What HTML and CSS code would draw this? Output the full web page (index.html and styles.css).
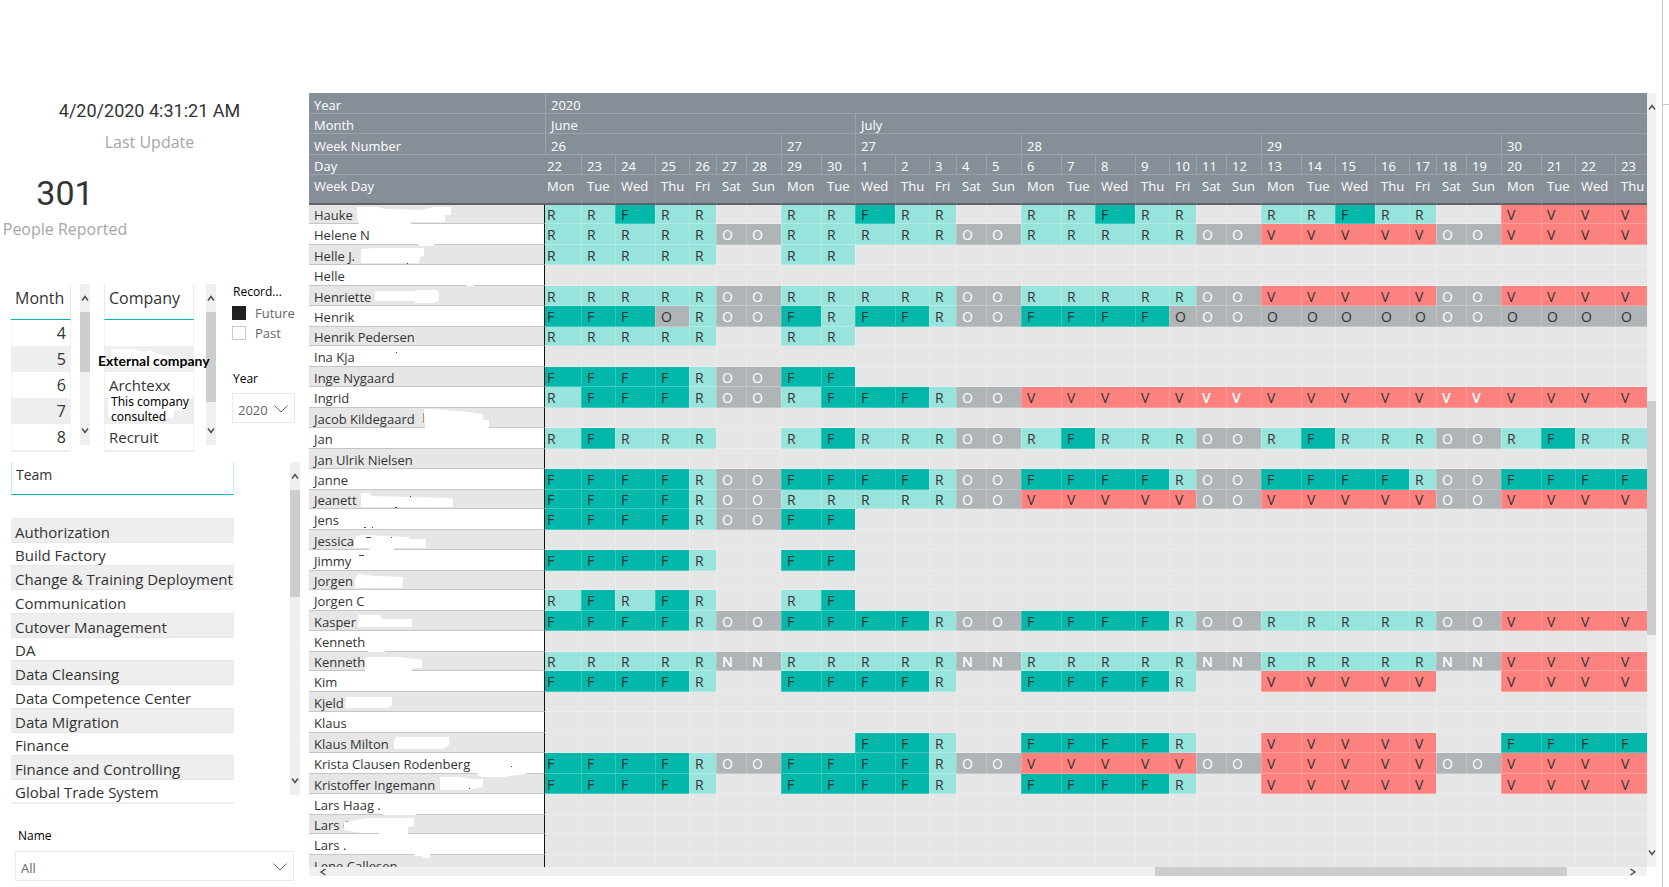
FILE: index.html
```html
<!DOCTYPE html>
<html lang="en">
<head>
<meta charset="utf-8">
<title>Resource calendar</title>
<link rel="stylesheet" href="styles.css">
</head>
<body>
<svg class="defs" aria-hidden="true">
  <symbol id="up" viewBox="0 0 8 8"><path d="M1 6.5 4 2.5 7 6.5" fill="none" stroke="#505050" stroke-width="1.5"/></symbol>
  <symbol id="down" viewBox="0 0 8 8"><path d="M1 1.5 4 5.5 7 1.5" fill="none" stroke="#505050" stroke-width="1.5"/></symbol>
  <symbol id="left" viewBox="0 0 8 8"><path d="M6.5 1 2 4 6.5 7" fill="none" stroke="#505050" stroke-width="1.5"/></symbol>
  <symbol id="right" viewBox="0 0 8 8"><path d="M1.500 1 6 4 1.500 7" fill="none" stroke="#505050" stroke-width="1.5"/></symbol>
  <symbol id="chevron" viewBox="0 0 14 8"><path d="M.5 .5 7 7 13.500 .5" fill="none" stroke="#666" stroke-width="1"/></symbol>
</svg>
<div class="report">
  <aside class="side">
    <div class="card card-update"><div class="card-date">4/20/2020 4:31:21 AM</div><div class="card-label">Last Update</div></div>
    <div class="card card-people"><div class="card-count">301</div><div class="card-label">People Reported</div></div>

    <div class="slicers">
      <div class="clip month">
        <table class="list">
          <thead><tr><th>Month</th></tr></thead>
          <tbody><tr><td>4</td></tr><tr><td>5</td></tr><tr><td>6</td></tr><tr><td>7</td></tr><tr><td>8</td></tr><tr><td></td></tr></tbody>
        </table>
      </div>
      <div class="scroll scroll-month">
        <button type="button" aria-label="Scroll up"><svg><use href="#up"/></svg></button><i class="before"></i><i class="thumb"></i><i class="after"></i>
        <button type="button" aria-label="Scroll down"><svg><use href="#down"/></svg></button>
      </div>
      <div class="clip company">
        <table class="list">
          <thead><tr><th>Company</th></tr></thead>
          <tbody><tr><td></td></tr><tr><td></td></tr><tr><td>Archtexx</td></tr><tr><td></td></tr><tr><td>Recruit</td></tr><tr><td></td></tr></tbody>
        </table>
      </div>
      <div class="scroll scroll-company">
        <button type="button" aria-label="Scroll up"><svg><use href="#up"/></svg></button><i class="before"></i><i class="thumb"></i><i class="after"></i>
        <button type="button" aria-label="Scroll down"><svg><use href="#down"/></svg></button>
      </div>
      <svg class="patch" viewBox="104 340 90 90" aria-hidden="true"><path fill="#fff" d="M111 349H134L144 352 150 350 158 354 180 359V367H111ZM108 398H186V410H174V418H108Z"/></svg>
      <span class="note note-external">External company</span>
      <span class="note note-consulted">This company consulted</span>
      <div class="filters">
        <fieldset>
          <legend>Record...</legend>
          <label class="check"><input type="checkbox" checked>Future</label>
          <label class="check"><input type="checkbox">Past</label>
        </fieldset>
        <label class="caption" for="year">Year</label>
        <div class="drop drop-year"><select id="year"><option>2020</option></select><svg><use href="#chevron"/></svg></div>
      </div>
    </div>

    <div class="team-row">
      <table class="team">
        <thead><tr><th>Team</th></tr></thead>
        <tbody>
          <tr><td>Authorization</td></tr><tr><td>Build Factory</td></tr><tr><td>Change &amp; Training Deployment</td></tr><tr><td>Communication</td></tr>
          <tr><td>Cutover Management</td></tr><tr><td>DA</td></tr><tr><td>Data Cleansing</td></tr><tr><td>Data Competence Center</td></tr>
          <tr><td>Data Migration</td></tr><tr><td>Finance</td></tr><tr><td>Finance and Controlling</td></tr><tr><td>Global Trade System</td></tr>
        </tbody>
      </table>
      <div class="scroll scroll-team">
        <button type="button" aria-label="Scroll up"><svg><use href="#up"/></svg></button><i class="before"></i><i class="thumb"></i><i class="after"></i>
        <button type="button" aria-label="Scroll down"><svg><use href="#down"/></svg></button>
      </div>
    </div>

    <label class="caption caption-name" for="name">Name</label>
    <div class="drop drop-name"><select id="name"><option>All</option></select><svg><use href="#chevron"/></svg></div>
  </aside>

  <main class="main">
    <div class="matrix-row">
      <div class="matrix-clip">
        <table class="matrix"><colgroup id="cols"></colgroup><thead id="head"></thead><tbody id="body"></tbody></table>
        <svg class="redact" viewBox="309 93 235 774" aria-hidden="true">
          <g fill="#fff">
            <path d="M357 207H377L386 209 423 210 433 207H451V215H445V222H411V224H359L357 218Z"/>
            <path d="M417 243H434V246H420Z"/>
            <path d="M361 249 375 248H424V256L420 257 419 263H361Z"/>
            <path d="M466 284H474V286H466Z"/>
            <path d="M375 291H415V290H436L439 292V300L435 303H415V301H375Z"/>
            <path d="M424 409H432L460 411 483 414V420H489V428H425Z"/>
            <path d="M361 493H370L372 496 450 498 453 499V507H361Z"/>
            <path d="M357 536 364 535 409 537V539H426V548H394V550H369V548H354V540Z"/>
            <path d="M394 568H402V570H394Z"/>
            <path d="M358 574 375 576 403 577 402 588H355V580Z"/>
            <path d="M358 615H381V619H412V627H358Z"/>
            <path d="M368 650H385V652H368Z"/>
            <path d="M366 657H399L415 659 422 660V668H413L411 671H365V660Z"/>
            <path d="M346 697H392V705L388 708H345Z"/>
            <path d="M396 737H449V745L443 749H394V741Z"/>
            <path d="M476 772H526V774L503 777H480Z"/>
            <path d="M440 777H459L472 779H483V787L468 790H440Z"/>
            <path d="M383 813H416V815H383Z"/>
            <path d="M344 822 368 818H414V826L408 827V834H379V833H362L344 830Z"/>
            <path d="M414 853H430V858H422V856H414Z"/>
          </g>
          <g fill="#444">
            <path d="M396 352h1v1h-1ZM364 527h2v1h-2ZM372 527h1v1h-1ZM359 555h5v1h-5ZM511 766h1v1h-1ZM407 263h1v1h-1ZM395 507h2v1h-2ZM410 496h1v1h-1ZM469 788h1v1h-1ZM366 537h5v1h-5ZM391 537h1v1h-1Z"/>
            <path fill="#b9916a" d="M423 413h1v10h-1Z"/>
          </g>
        </svg>
      </div>
      <div class="scroll scroll-matrix">
        <button type="button" aria-label="Scroll up"><svg><use href="#up"/></svg></button><i class="before"></i><i class="thumb"></i><i class="after"></i>
        <button type="button" aria-label="Scroll down"><svg><use href="#down"/></svg></button>
      </div>
    </div>
    <div class="scroll scroll-x">
      <button type="button" aria-label="Scroll left"><svg><use href="#left"/></svg></button><i class="before"></i><i class="thumb"></i><i class="after"></i>
      <button type="button" aria-label="Scroll right"><svg><use href="#right"/></svg></button>
    </div>
  </main>
  <div class="rail"></div>
</div>
<script src="script.js"></script>
</body>
</html>
```
FILE: styles.css
```css
* { box-sizing: border-box; }
body { margin: 0; background: #fff; color: #333; font-family: "Open Sans", "Noto Sans", sans-serif; font-size: 13px; overflow: hidden; }
table { border-collapse: separate; border-spacing: 0; table-layout: fixed; width: 100%; }
th { font-weight: 400; text-align: left; }
td, th { padding: 0; white-space: nowrap; }
button { border: 0; background: none; padding: 0; }
.defs { position: absolute; width: 0; height: 0; }

.report { display: flex; height: 100vh; }
.side { flex: none; width: 309px; padding-top: 101px; }
.main { flex: 1; min-width: 0; padding: 93px 0 11px; display: flex; flex-direction: column; }
.rail { flex: none; width: 7px; margin-left: 6px; border-left: 1px solid #c8c8c8; }
.rail::before { content: ""; display: block; margin-top: 104px; border-top: 1px solid #c8c8c8; }

/* Cards */
.card { text-align: center; }
.card-update { width: 299px; }
.card-people { width: 130px; margin-top: 21px; }
.card-date { font: 18px/20px Roboto, sans-serif; margin-bottom: 11px; }
.card-count { font: 34px/40px Roboto, sans-serif; margin-bottom: 6px; }
.card-label { font-size: 16px; line-height: 20px; color: #a6a6a6; }

/* Scroll bars */
.scroll { display: flex; flex-direction: column; flex: none; width: 10px; background: #f0f0f0; }
.scroll button { flex: none; height: 28px; display: flex; align-items: center; justify-content: center; }
.scroll button svg { width: 8px; height: 8px; flex: none; }
.scroll .thumb { background: #cdcdcd; }
.scroll-month, .scroll-company { height: 161px; }
.scroll-month .thumb { flex: 60; }
.scroll-month .after { flex: 45; }
.scroll-company .thumb { flex: 90; }
.scroll-company .after { flex: 15; }
.scroll-team { height: 333px; }
.scroll-team .thumb { flex: 107; }
.scroll-team .after { flex: 170; }
.scroll-matrix { width: 9px; }
.scroll-matrix .before { flex: 280; }
.scroll-matrix .thumb { flex: 234; }
.scroll-matrix .after { flex: 204; }
.scroll-x { flex-direction: row; width: auto; height: 9px; margin-right: 9px; }
.scroll-x button { width: 28px; height: 9px; }
.scroll-x .before { flex: 818; }
.scroll-x .thumb { flex: 412; }
.scroll-x .after { flex: 52; }

/* Month and company lists */
.slicers { position: relative; display: flex; margin-top: 45px; padding-left: 11px; height: 168px; }
.clip { overflow: hidden; }
.month { width: 60px; margin-right: 9px; }
.company { width: 90px; margin: 0 12px 0 14px; }
.list { font-size: 16px; }
.list th { height: 36px; border-bottom: 1px solid #01b8aa; border-right: 1px solid #d5f2f0; padding: 0 4px 7px; line-height: 24px; }
.list td { height: 26px; padding: 0 4px; line-height: 24px; border: 1px solid #f3f3f3; border-width: 0 1px; }
.list tr:nth-child(even) td { background: #eee; border-color: #eee; }
.month td { text-align: right; }
.company th { border-left: 1px solid #d5f2f0; }
.company td { font-size: 15px; }
.patch { position: absolute; left: 104px; top: 56px; width: 90px; height: 90px; }
.note { position: absolute; color: #000; }
.note-external { left: 98px; top: 67px; font: 700 14px/20px Lato, sans-serif; }
.note-consulted { left: 111px; top: 110px; width: 84px; font: 12px/15px "Noto Sans", sans-serif; }

/* Filters */
.filters { margin-left: 16px; width: 62px; color: #000; font-size: 12px; }
.filters fieldset { border: 0; margin: 0; padding: 0; }
.filters legend { padding: 0 0 0 1px; line-height: 16px; }
.check { display: flex; align-items: center; gap: 9px; height: 20px; font-size: 13px; color: #666; }
.filters legend + .check { margin-top: 3px; }
.check input { appearance: none; flex: none; width: 14px; height: 14px; margin: 0; border: 1px solid #d0c8c4; }
.check input:checked { background: #212121; border-color: #212121; }
.caption { display: block; color: #000; font-size: 12px; line-height: 16px; }
.filters .caption { margin: 28px 0 6px 1px; }
.drop { position: relative; height: 30px; border: 1px solid #eaeaea; }
.drop select { appearance: none; display: block; width: 100%; height: 28px; border: 0; padding: 3px 5px 0; background: none; color: #666; font: 13px/24px "Open Sans", sans-serif; }
.drop svg { position: absolute; right: 6px; top: 11px; width: 14px; height: 8px; pointer-events: none; }
.drop-year { width: 63px; }

/* Team list */
.team-row { display: flex; margin-top: 10px; padding-left: 11px; }
.team { width: 223px; margin-right: 56px; font-size: 15px; }
.team th { height: 33px; padding: 0 4px 7px; font-size: 14px; border: 1px solid #c5eeea; border-width: 0 1px; border-bottom: 1px solid #01b8aa; }
.team thead::after { content: ""; display: block; height: 23px; }
.team td { height: 22px; padding: 2px 4px 0; line-height: 20px; }
.team tr:nth-child(4n) td { height: 23px; }
.team tr:nth-child(odd) td { height: 25px; background: #eee; border: 1px solid #e6e6e6; border-width: 1px 0; }
.team tbody tr:last-child td { border-bottom: 2px solid #eee; height: 24px; }
.caption-name { margin: 24px 0 7px 18px; }
.drop-name { width: 279px; margin-left: 15px; }

/* Calendar matrix */
.matrix-row { flex: 1; min-height: 0; display: flex; }
.matrix-clip { flex: 1; min-width: 0; overflow: hidden; position: relative; background: #e6e6e6; }
.matrix { line-height: 16px; }
.matrix .c-name { width: 236px; }
.matrix .c-first { width: 36px; }
.matrix th, .matrix td { border-bottom: 1px solid rgba(255, 255, 255, .25); border-left: 1px solid rgba(255, 255, 255, .2); padding: 2px 0 0 5px; vertical-align: middle; }
.matrix thead th { background: #868f98; color: #fff; height: 20px; padding-top: 3px; border-color: #9aa2aa; }
.matrix thead tr:nth-child(odd) th { height: 21px; }
.matrix thead tr:last-child th { height: 30px; padding-top: 0; padding-bottom: 6px; border-bottom: 2px solid #5d6268; border-left-color: #8b949d; }
.matrix th:first-child { border-left: 0; }
.matrix tbody tr { height: 20px; }
.matrix tbody tr:nth-child(even) { height: 21px; }
.matrix tbody tr:nth-child(8n + 7), .matrix tbody tr:first-child, .matrix tbody tr:nth-child(19) { height: 19px; }
.matrix tbody th { background: #fff; border-right: 1px solid #111; border-bottom-color: #c6c6c6; }
.matrix tbody tr:nth-child(odd) th { background: #e6e6e6; }
.matrix tbody td { background: #e6e6e6; font-size: 14px; }
.matrix tr > .first { padding-left: 2px; border-left: 0; }
.matrix tbody .F { background: #01b8aa; }
.matrix tbody .R { background: #99e3dd; }
.matrix tbody .V { background: #fd817e; }
.matrix tbody .O, .matrix tbody .N { background: #afb4b6; }
.matrix tbody .weekend { color: #fff; }
.matrix tbody .weekend.V, .matrix tbody .weekend.N { font-weight: 600; }
.redact { position: absolute; left: 0; top: 0; width: 235px; height: 774px; }
```
FILE: script.js
```js
const week = [['Mon', 40], ['Tue', 34], ['Wed', 40], ['Thu', 34], ['Fri', 27], ['Sat', 30], ['Sun', 35]];
const days = Array.from({ length: 32 }, (_, i) => ({
  date: i < 9 ? 22 + i : i - 8,
  name: week[i % 7][0],
  width: week[i % 7][1],
  weekend: i % 7 > 4
}));

const rows = [
  ['Hauke', 'RRFRR..RRFRR..RRFRR..RRFRR..VVVV'],
  ['Helene N', 'RRRRROORRRRROORRRRROOVVVVVOOVVVV'],
  ['Helle J.', 'RRRRR..RR'],
  ['Helle', ''],
  ['Henriette', 'RRRRROORRRRROORRRRROOVVVVVOOVVVV'],
  ['Henrik', 'FFFOROOFRFFROOFFFFOOOOOOOOOOOOOO'],
  ['Henrik Pedersen', 'RRRRR..RR'],
  ['Ina Kja', ''],
  ['Inge Nygaard', 'FFFFROOFF'],
  ['Ingrid', 'RFFFROORFFFROOVVVVVVVVVVVVVVVVVV'],
  ['Jacob Kildegaard', ''],
  ['Jan', 'RFRRR..RFRRROORFRRROORFRRROORFRR'],
  ['Jan Ulrik Nielsen', ''],
  ['Janne', 'FFFFROOFFFFROOFFFFROOFFFFROOFFFF'],
  ['Jeanett', 'FFFFROORRRRROOVVVVVOOVVVVVOOVVVV'],
  ['Jens', 'FFFFROOFF'],
  ['Jessica', ''],
  ['Jimmy', 'FFFFR..FF'],
  ['Jorgen', ''],
  ['Jorgen C', 'RFRFR..RF'],
  ['Kasper', 'FFFFROOFFFFROOFFFFROORRRRROOVVVV'],
  ['Kenneth', ''],
  ['Kenneth', 'RRRRRNNRRRRRNNRRRRRNNRRRRRNNVVVV'],
  ['Kim', 'FFFFR..FFFFR..FFFFR..VVVVV..VVVV'],
  ['Kjeld', ''],
  ['Klaus', ''],
  ['Klaus Milton', '.........FFR..FFFFR..VVVVV..FFFF'],
  ['Krista Clausen Rodenberg', 'FFFFROOFFFFROOVVVVVOOVVVVVOOVVVV'],
  ['Kristoffer Ingemann', 'FFFFR..FFFFR..FFFFR..VVVVV..VVVV'],
  ['Lars Haag .', ''],
  ['Lars C', ''],
  ['Lars .', ''],
  ['Lene Callesen', '']
];

document.getElementById('cols').innerHTML = '<col class="c-name">' +
  days.map((d, i) => i ? `<col style="width:${d.width}px">` : '<col class="c-first">').join('');
document.querySelector('.matrix').style.width =
  236 + 36 + days.slice(1).reduce((sum, d) => sum + d.width, 0) + 'px';

const span = (label, groups) => `<tr><th>${label}</th>` +
  groups.map(([text, n]) => `<th colspan="${n}">${text}</th>`).join('') + '</tr>';
const each = (label, key) => `<tr><th>${label}</th>` +
  days.map((d, i) => `<th class="${i ? '' : 'first'}">${d[key]}</th>`).join('') + '</tr>';

document.getElementById('head').innerHTML =
  span('Year', [['2020', 32]]) +
  span('Month', [['June', 9], ['July', 23]]) +
  span('Week Number', [['26', 7], ['27', 2], ['27', 5], ['28', 7], ['29', 7], ['30', 4]]) +
  each('Day', 'date') +
  each('Week Day', 'name');

document.getElementById('body').innerHTML = rows.map(([name, marks]) => `<tr><th>${name}</th>` +
  days.map((d, i) => {
    const mark = (marks[i] || '.').replace('.', '');
    return `<td class="${mark}${d.weekend ? ' weekend' : ''}${i ? '' : ' first'}">${mark}</td>`;
  }).join('') + '</tr>').join('');
```
